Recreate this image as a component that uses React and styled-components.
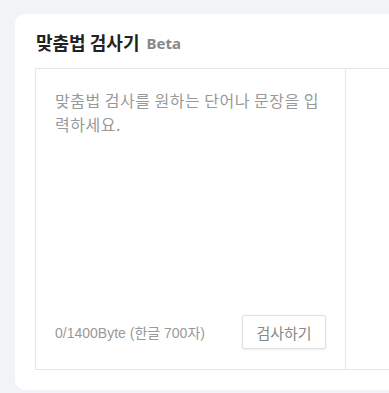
import React from 'react';
import styled, { createGlobalStyle } from 'styled-components';

const Global = createGlobalStyle`
  html, body {
    margin: 0;
    padding: 0;
    background: #f2f3f7;
    overflow: hidden;
  }
  body {
    font-family: "Noto Sans CJK KR", "Noto Sans", sans-serif;
  }
`;

const Page = styled.div`
  height: 393px;
  padding: 14px 0 0 15px;
  box-sizing: border-box;
  overflow: hidden;
`;

const Card = styled.section`
  width: 800px;
  background: #fff;
  border-radius: 10px;
  padding: 16px 20px 20px;
  box-sizing: border-box;
`;

const Title = styled.h2`
  margin: 0 0 14px 1px;
  height: 24px;
  display: flex;
  align-items: center;
  gap: 7px;
  font-size: 18px;
  font-weight: 700;
  color: #222;
  letter-spacing: 0;
`;

const Badge = styled.span`
  font-family: "Noto Sans", sans-serif;
  font-size: 15px;
  font-weight: 700;
  color: #888;
  margin-top: 2px;
`;

const Box = styled.div`
  display: grid;
  grid-template-columns: 310px 1fr;
  height: 302px;
  border: 1px solid #e6e6e6;
  box-sizing: border-box;
`;

const Panel = styled.div`
  display: flex;
  flex-direction: column;
  padding: 19px 19px 20px 19px;
  border-right: ${p => (p.divided ? '1px solid #e6e6e6' : 'none')};
`;

const Input = styled.textarea`
  flex: 1;
  border: none;
  outline: none;
  resize: none;
  padding: 0;
  margin: 0;
  font-family: "Noto Sans CJK KR", sans-serif;
  font-size: 16px;
  letter-spacing: 0.5px;
  line-height: 24px;
  color: #333;
  &::placeholder {
    color: #999;
  }
`;

const Footer = styled.div`
  display: flex;
  align-items: center;
  justify-content: space-between;
`;

const Count = styled.span`
  font-family: "Liberation Sans", "Noto Sans CJK KR", sans-serif;
  font-size: 14px;
  color: #999;
`;

const Button = styled.button`
  width: 84px;
  height: 34px;
  background: #fff;
  border: 1px solid #e0e0e0;
  border-radius: 2px;
  box-shadow: 0 1px 2px rgba(0, 0, 0, 0.08);
  font-family: "Noto Sans CJK KR", sans-serif;
  font-size: 15px;
  color: #888;
  cursor: pointer;
`;

export default function App() {
  return (
    <>
      <Global />
      <Page>
        <Card>
          <Title>
            맞춤법 검사기 <Badge>Beta</Badge>
          </Title>
          <Box>
            <Panel divided>
              <Input placeholder="맞춤법 검사를 원하는 단어나 문장을 입력하세요." />
              <Footer>
                <Count>0/1400Byte (한글 700자)</Count>
                <Button>검사하기</Button>
              </Footer>
            </Panel>
            <Panel />
          </Box>
        </Card>
      </Page>
    </>
  );
}
